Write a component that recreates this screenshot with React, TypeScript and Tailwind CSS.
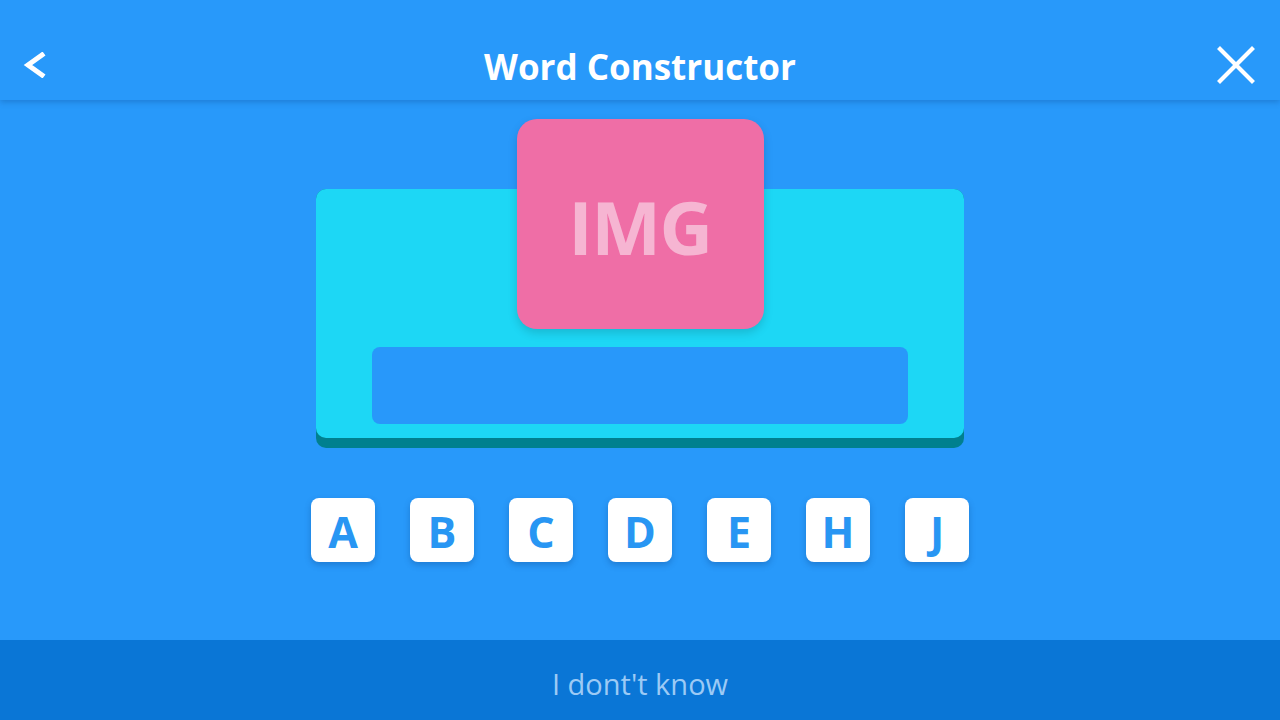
const letters = ["A", "B", "C", "D", "E", "H", "J"];

function Header() {
  return (
    <header className="relative z-10 flex h-[100px] items-center justify-between bg-[#2899fa] px-6 pt-[32px] shadow-[0_2px_6px_rgba(0,40,100,0.25)]">
      <button className="flex h-10 w-10 items-center text-white">
        <svg width="24" height="26" viewBox="0 0 24 26" className="-ml-[2px] -mt-[3px]">
          <polyline points="20,3 6,13 20,23" fill="none" stroke="currentColor" strokeWidth="5" strokeLinecap="square" strokeLinejoin="miter" />
        </svg>
      </button>
      <h1 className="pt-[2px] text-[35px] font-bold text-white">Word Constructor</h1>
      <button className="flex h-10 w-10 items-center justify-end text-white">
        <svg width="38" height="38" viewBox="0 0 38 38" className="mr-[1px] -mt-[2px]">
          <path d="M3 3 L35 35 M35 3 L3 35" fill="none" stroke="currentColor" strokeWidth="4.2" strokeLinecap="square" />
        </svg>
      </button>
    </header>
  );
}

function WordCard() {
  return (
    <div className="flex flex-col items-center pt-[19px]">
      <div className="relative z-10 flex h-[210px] w-[247px] items-center justify-center rounded-[20px] bg-[#ef6ea6] shadow-[0_4px_10px_rgba(0,0,0,0.15)]">
        <span className="pt-[4px] text-[74px] font-bold tracking-[-0.02em] text-[#f6b5d2]">IMG</span>
      </div>
      <div className="-mt-[140px] w-[648px] rounded-[10px] bg-[#00808f] pb-[10px]">
        <div className="rounded-[10px] bg-[#1dd7f5] px-[56px] pb-[14px] pt-[158px]">
          <div className="h-[77px] w-full rounded-[8px] bg-[#2898fa]" />
        </div>
      </div>
    </div>
  );
}

function LetterTiles() {
  return (
    <div className="mt-[50px] flex justify-center gap-[35px]">
      {letters.map((l) => (
        <button
          key={l}
          className="flex h-16 w-16 items-center justify-center rounded-[8px] bg-white pt-[4px] text-[43px] font-bold text-[#2896f3] shadow-[0_3px_6px_rgba(0,40,100,0.25)]"
        >
          {l}
        </button>
      ))}
    </div>
  );
}

export default function App() {
  return (
    <div className="flex h-[720px] w-full flex-col bg-[#2899fa] font-['Open_Sans',sans-serif]">
      <Header />
      <main className="flex-1">
        <WordCard />
        <LetterTiles />
      </main>
      <footer className="flex h-[80px] items-center justify-center bg-[#0a76d6] pt-[8px]">
        <span className="text-[29px] text-[#9ccaf5]">I dont't know</span>
      </footer>
    </div>
  );
}
